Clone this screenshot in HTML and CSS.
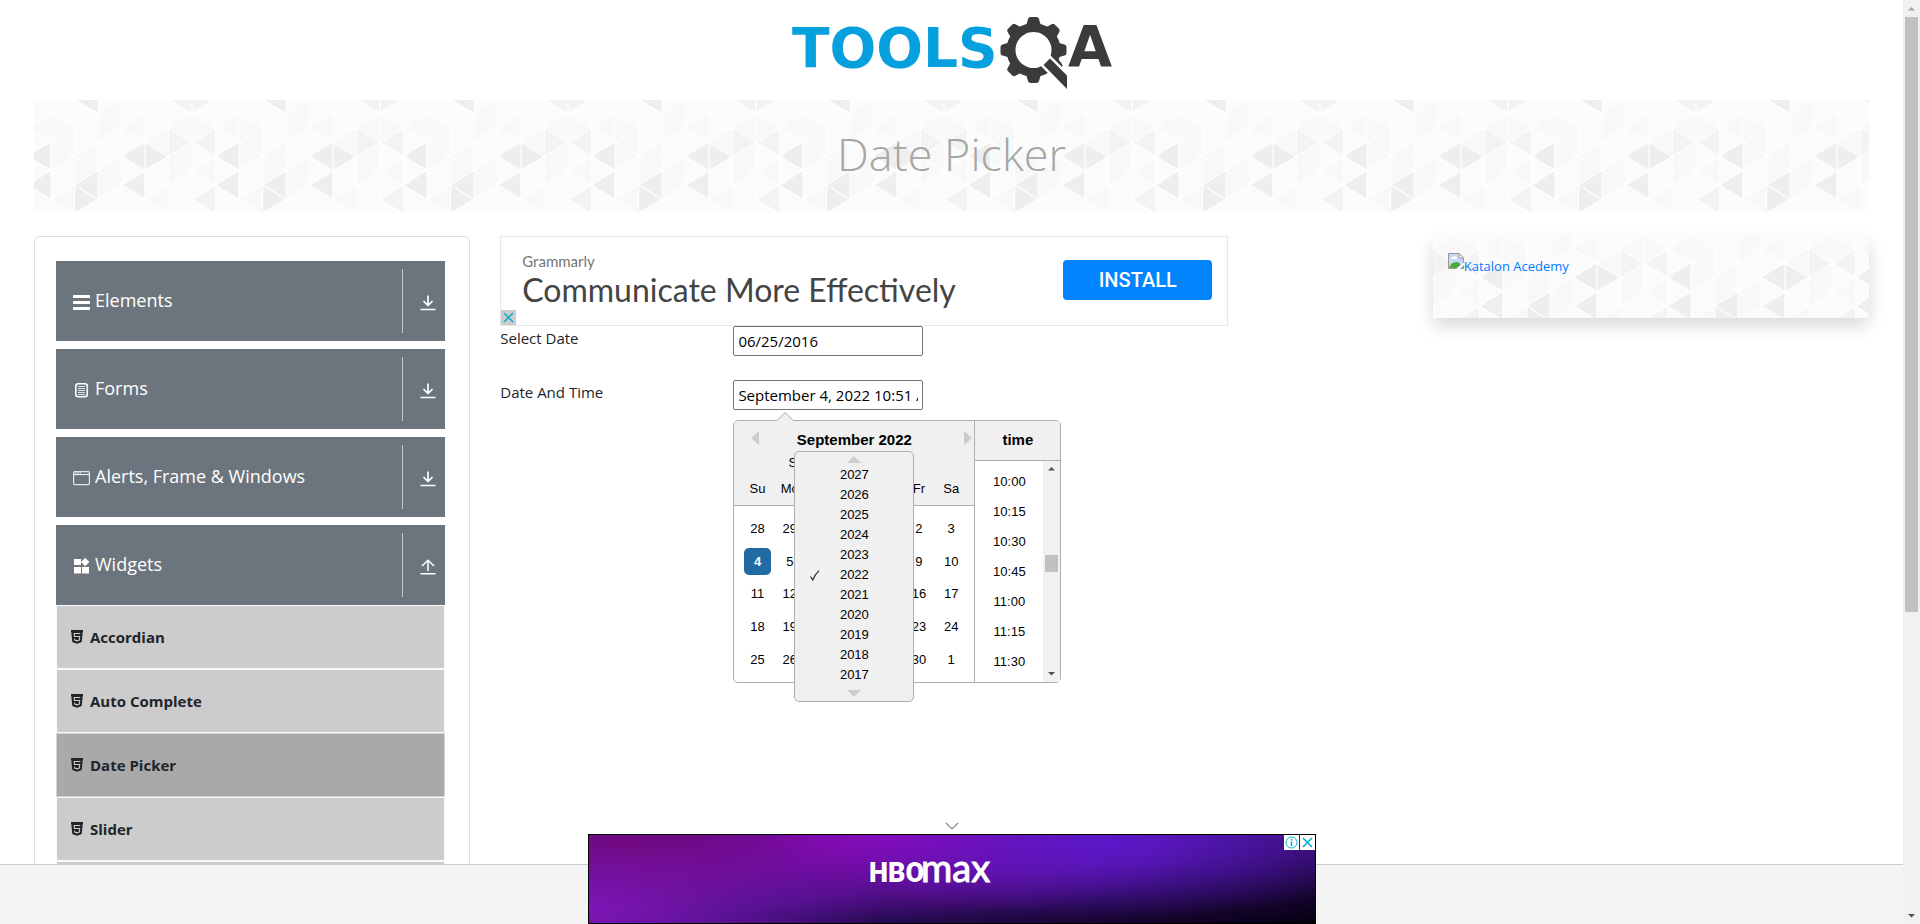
FILE: index.html
```html
<!DOCTYPE html>
<html lang="en">
<head>
<meta charset="utf-8">
<title>ToolsQA - Date Picker</title>
<link rel="stylesheet" href="styles.css">
</head>
<body>
<svg class="defs" width="0" height="0" aria-hidden="true">
  <symbol id="i-down" viewBox="0 0 16 16"><path d="M8 .5v10M3.500 6 8 10.500 12.500 6M.5 14.500h15" fill="none" stroke="currentColor" stroke-width="1.700"/></symbol>
  <symbol id="i-up" viewBox="0 0 16 16"><path d="M8 12V1.500M2 7l6-5.700L14 7M.5 14.700h15" fill="none" stroke="currentColor" stroke-width="1.500"/></symbol>
  <symbol id="i-html" viewBox="0 0 12 14"><path d="M0 0h12v2h-.3l-1 10L6 13.700 1.300 12 .3 2H0z" fill="currentColor"/><path d="M9.300 3.500H3.200l.3 3h5.200l-.4 3.500L6 10.800 3.700 10l-.1-1.300" fill="none" stroke="#ccc" stroke-width="1.100"/></symbol>
</svg>
<div class="page">
  <header class="site-header">
    <a href="#" class="logo" aria-label="ToolsQA">
      <svg width="350" height="100" viewBox="777 0 350 100">
        <text class="logo-tools" x="792" y="67">TOOLS</text>
        <g fill="#3b3b3c">
          <path id="tooth" d="M1026 26l2-7q.5-2 2.500-2h6q2 0 2.500 2l2 7z"/>
          <use href="#tooth" transform="rotate(45 1033.500 50)"/>
          <use href="#tooth" transform="rotate(90 1033.500 50)"/>
          <use href="#tooth" transform="rotate(180 1033.500 50)"/>
          <use href="#tooth" transform="rotate(225 1033.500 50)"/>
          <use href="#tooth" transform="rotate(270 1033.500 50)"/>
          <use href="#tooth" transform="rotate(315 1033.500 50)"/>
          <use href="#tooth" transform="rotate(126 1033.500 50)"/>
          <path fill-rule="evenodd" d="M1033.500 23a27 27 0 1 0 .01 0zM1033.500 32a18 18 0 1 1-.01 0z"/>
          <path d="M1043.500 65 1050 58.500 1067 75.500V89z" stroke="#fff" stroke-width="5" stroke-linejoin="miter" paint-order="stroke"/>
        </g>
        <text class="logo-a" x="1068" y="67">A</text>
      </svg>
    </a>
  </header>
  <main class="container">
    <div class="banner pattern"><h1>Date Picker</h1></div>
    <div class="columns">
      <nav class="sidebar">
        <div class="group"><button class="group-head">
          <svg width="17" height="16" viewBox="0 0 17 16"><path d="M1 2.500h15M1 8.500h15M1 14.500h15" stroke="#fff" stroke-width="3" stroke-linecap="round"/></svg>
          <span class="group-name">Elements</span><span class="group-arrow"><svg width="16" height="16"><use href="#i-down"/></svg></span></button></div>
        <div class="group"><button class="group-head">
          <svg width="17" height="16" viewBox="0 0 17 16"><rect x="2.800" y="1.800" width="11.500" height="13" rx="2.500" fill="none" stroke="#fff" stroke-width="1.600"/><path d="M5 4.500h7M5 6.500h7M5 8.500h7M5 10.500h7M5 12.500h7" stroke="#dfe2e4" stroke-width="1"/></svg>
          <span class="group-name">Forms</span><span class="group-arrow"><svg width="16" height="16"><use href="#i-down"/></svg></span></button></div>
        <div class="group"><button class="group-head">
          <svg width="17" height="16" viewBox="0 0 17 16"><rect x=".6" y="1.600" width="15.800" height="13" rx="1" fill="none" stroke="#e4e6e8" stroke-width="1.200"/><path d="M1 4.600h15" stroke="#fff" stroke-width="1"/><path d="M2 3h6" stroke="#fff" stroke-dasharray="1.500 .8"/></svg>
          <span class="group-name">Alerts, Frame &amp; Windows</span><span class="group-arrow"><svg width="16" height="16"><use href="#i-down"/></svg></span></button></div>
        <div class="group"><button class="group-head">
          <svg width="17" height="16" viewBox="0 0 17 16" fill="#fff"><path d="M1 1h7v6H1zM1 9h7v6.500H1zM9 9h7v6.500H9zM12.200-.2l4.200 4.200-4.200 4.200L8 4z"/></svg>
          <span class="group-name">Widgets</span><span class="group-arrow"><svg width="16" height="16"><use href="#i-up"/></svg></span></button>
          <ul class="menu">
            <li><a href="#"><svg width="12" height="14"><use href="#i-html"/></svg>Accordian</a></li>
            <li><a href="#"><svg width="12" height="14"><use href="#i-html"/></svg>Auto Complete</a></li>
            <li class="active"><a href="#"><svg width="12" height="14"><use href="#i-html"/></svg>Date Picker</a></li>
            <li><a href="#"><svg width="12" height="14"><use href="#i-html"/></svg>Slider</a></li>
            <li><a href="#"><svg width="12" height="14"><use href="#i-html"/></svg>Progress Bar</a></li>
          </ul>
        </div>
      </nav>
      <section class="content">
        <div class="ad">
          <div class="ad-text"><span class="ad-brand">Grammarly</span><span class="ad-title">Communicate More Effectively</span></div>
          <button class="install">INSTALL</button>
          <button class="ad-close" aria-label="Close ad"><svg width="15" height="15" viewBox="0 0 15 15"><path d="m3 3 9 9m0-9-9 9" stroke="#00aecd" stroke-width="1.500"/></svg></button>
        </div>
        <div class="field"><label for="date">Select Date</label><input id="date" type="text" value="06/25/2016"></div>
        <div class="field"><label for="datetime">Date And Time</label>
          <div class="picker-anchor">
            <input id="datetime" type="text" value="September 4, 2022 10:51 AM">
            <div class="picker">
              <svg class="tip" width="18" height="9" viewBox="0 0 18 9"><path d="M0 9 9 .7 18 9" fill="#f0f0f0" stroke="#aeaeae"/></svg>
              <div class="month">
                <div class="month-head">
                  <div class="month-nav">
                    <button aria-label="Previous month"><svg width="8" height="14"><path d="M8 0v14L0 7z" fill="#ccc"/></svg></button>
                    <strong>September 2022</strong>
                    <button aria-label="Next month"><svg width="8" height="14"><path d="M0 0v14l8-7z" fill="#ccc"/></svg></button>
                  </div>
                  <div class="month-selects"><span>September</span><span>2022</span></div>
                  <div class="week"><span>Su</span><span>Mo</span><span>Tu</span><span>We</span><span>Th</span><span>Fr</span><span>Sa</span></div>
                </div>
                <div class="days">
                  <button>28</button><button>29</button><button>30</button><button>31</button><button>1</button><button>2</button><button>3</button>
                  <button class="selected">4</button><button>5</button><button>6</button><button>7</button><button>8</button><button>9</button><button>10</button>
                  <button>11</button><button>12</button><button>13</button><button>14</button><button>15</button><button>16</button><button>17</button>
                  <button>18</button><button>19</button><button>20</button><button>21</button><button>22</button><button>23</button><button>24</button>
                  <button>25</button><button>26</button><button>27</button><button>28</button><button>29</button><button>30</button><button>1</button>
                </div>
              </div>
              <div class="time">
                <div class="time-head">time</div>
                <div class="time-body">
                  <ul class="time-list"><li>10:00</li><li>10:15</li><li>10:30</li><li>10:45</li><li>11:00</li><li>11:15</li><li>11:30</li></ul>
                  <div class="bar time-bar">
                    <svg width="17" height="16"><path d="M5 9.500 8.500 6l3.500 3.500z" fill="#505050"/></svg>
                    <span class="thumb"></span>
                    <svg width="17" height="16"><path d="M5 6h7L8.500 9.500z" fill="#505050"/></svg>
                  </div>
                </div>
              </div>
              <div class="years">
                <svg width="14" height="7"><path d="M0 7 7 0l7 7z" fill="#ccc"/></svg>
                <ul>
                  <li>2027</li><li>2026</li><li>2025</li><li>2024</li><li>2023</li>
                  <li class="current"><svg class="check" width="10" height="11" viewBox="0 0 10 11"><path d="M.5 6.500 2.800 10Q5 4.500 9 .7" fill="none" stroke="#222" stroke-width="1.100"/></svg>2022</li>
                  <li>2021</li><li>2020</li><li>2019</li><li>2018</li><li>2017</li>
                </ul>
                <svg width="14" height="7"><path d="M0 0h14L7 7z" fill="#ccc"/></svg>
              </div>
            </div>
          </div>
        </div>
      </section>
      <aside class="promo pattern">
        <a href="#"><svg width="16" height="16" viewBox="0 0 16 16"><path d="M.5 .5h10.500l4.500 4.500v10.500H.5z" fill="#c5d9f7" stroke="#999"/><path d="M3 6q0-2 2-2 2-1.500 3.500.5Q10 5 9.500 6z" fill="#fff"/><path d="M1 15q2-6 7.500-6 3 0 4 3l-4 3zM13 15l2-2v2z" fill="#4fa838"/><path d="M11 .5V5h4.500z" fill="#fff" stroke="#999"/><path d="m8.500 16 7.500-6.500v2.500l-4 4z" fill="#fff"/></svg>Katalon Acedemy</a>
      </aside>
    </div>
  </main>
  <footer class="footer"></footer>
  <div class="anchor-ad">
    <button class="collapse" aria-label="Hide ad"><svg width="14" height="8" viewBox="0 0 14 8"><path d="m1 1 6 6 6-6" fill="none" stroke="#888" stroke-width="1.200"/></svg></button>
    <div class="hbo">
      <svg width="130" height="48" viewBox="0 0 130 48" role="img" aria-label="HBO max">
        <text class="hbo-bold" x="0" y="36">HBO</text>
        <text class="hbo-max" x="52" y="36">max</text>
      </svg>
      <div class="ad-marks">
        <button aria-label="Ad info"><svg width="15" height="15" viewBox="0 0 15 15" fill="none" stroke="#00aecd"><circle cx="7.500" cy="7.500" r="5.500"/><path d="M7.500 6.500V11M7.500 4v1.500" stroke-width="1.500"/></svg></button>
        <button aria-label="Close"><svg width="15" height="15" viewBox="0 0 15 15"><path d="m3 3 9 9m0-9-9 9" stroke="#00aecd" stroke-width="1.500"/></svg></button>
      </div>
    </div>
  </div>
</div>
<div class="bar page-bar">
  <svg width="17" height="17"><path d="M5 10.500 8.500 7l3.500 3.500z" fill="#a3a3a3"/></svg>
  <span class="thumb"></span>
  <svg width="17" height="17"><path d="M5 7h7l-3.500 3.500z" fill="#505050"/></svg>
</div>
</body>
</html>
```
FILE: styles.css
```css
* { box-sizing: border-box; }
body { margin: 0; height: 100vh; display: flex; overflow: hidden; background: #fff; color: #212529; font: 15px/24px "Open Sans", "Noto Sans", sans-serif; }
button { border: 0; padding: 0; margin: 0; background: none; font: inherit; color: inherit; cursor: pointer; }
ul { list-style: none; margin: 0; padding: 0; }
a { text-decoration: none; }
svg { display: block; flex: none; }
.defs { position: absolute; }

.page { flex: 1; min-width: 0; position: relative; overflow: hidden; }
.site-header { display: flex; justify-content: center; }
.logo-tools, .logo-a { font: bold 55px "DejaVu Sans", sans-serif; fill: #06a0df; }
.logo-a { font-size: 57px; fill: #3b3b3c; }
.container { padding: 0 34px; }

.pattern { background-color: #fbfbfb; background-image: url("data:image/svg+xml,%3Csvg xmlns='http://www.w3.org/2000/svg' width='188' height='112' viewBox='0 0 188 112'%3E%3Cg fill='%23f8f8f8'%3E%3Cpath d='M17 13v29l-23.500-14.500zM40.500 27v29L17 42zM64 42v28L40.500 56zM87.500 56v29L64 70zM87.500 -1v28L64 13zM111 13v29L87.500 27zM134.500 27v29L111 42zM158 42v28l-23.500-14zM158 13v29l-23.500-15zM134.500 85v29L111 99zM17 13l23.500 14L17 42zM17 42l23.500 14L17 70zM40.500 56L64 70 40.500 85zM64 13l23.500 14L64 42zM64 70l23.500 15L64 99zM134.500 56L158 70l-23.500 15zM158 13l23.500 14L158 42zM40.500 85v29L17 99zM182 56v29l-24-15z'/%3E%3C/g%3E%3Cg fill='%23f3f3f3'%3E%3Cpath d='M134.500 27L158 42l-23.500 14zM182 27v29l-24-14zM182 85v29l-24-15zM158 -16v29l-23.500-14zM158 -16l24 15-24 14z'/%3E%3C/g%3E%3Cg fill='%23eeeeee'%3E%3Cpath d='M17 42v28L-6.500 56zM17 70v29L-6.500 85zM205 42v28l-23.500-14zM205 70v29l-23.500-14zM64 70v29L40.500 85zM40.500 85L64 99l-23.500 15zM111 42v28L87.500 56zM111 70v29L87.500 85zM111 42l23.500 14L111 70zM64 -16v29L40.500 -1z'/%3E%3C/g%3E%3Cpath d='M17 0v112M40.500 0v112M64 0v112M87.500 0v112M111 0v112M134.500 0v112M158 0v112M181.500 0v112M-7 -1L182 114M-7 27L135 114M-7 56L88 114M-7 85L41 114M38 -2L189 90M85 -2L189 61M132 -2L189 32M179 -2L189 4M-7 -1L17 -16M-7 27L41 -2M-7 56L88 -2M-7 85L135 -2M-7 114L182 -2M38 115L189 24M85 115L189 53M132 115L189 81M179 115L189 109' fill='none' stroke='%23fefefe' stroke-width='1.300'/%3E%3C/svg%3E"); }
.banner { height: 112px; padding-bottom: 4px; display: flex; justify-content: center; align-items: center; }
.banner h1 { margin: 0; font-weight: 300; font-size: 45px; line-height: 56px; color: #a6a6a6; }
.columns { margin-top: 24px; display: grid; grid-template-columns: repeat(4, minmax(0, 1fr)); gap: 30px; align-items: start; }

.sidebar { border: 1px solid #dfdfdf; border-radius: 5px; padding: 24px 24px 24px 21px; display: flex; flex-direction: column; gap: 8px; }
.group-head { width: 100%; height: 80px; padding: 8px 9px 8px 17px; display: flex; align-items: center; background: #6c757d; color: #fff; font-size: 18px; text-align: left; }
.group-head > svg { margin-top: 2px; }
.group-name { flex: 1; padding: 0 0 2px 5px; }
.group-arrow { height: 100%; padding: 3px 0 0 17px; display: flex; align-items: center; border-left: 1px solid #c4c8cb; }
.menu a { height: 64px; padding: 0 14px; display: flex; align-items: center; gap: 7px; border: 1px solid #fafafa; background: #ccc; color: #212529; font-weight: 700; }
.menu .active a { background: #a9a9a9; border-color: #ced4da; }

.content { grid-column: span 2; }
.ad { position: relative; max-width: 728px; height: 90px; padding: 0 15px 2px 21px; display: flex; align-items: center; justify-content: space-between; border: 1px solid #e6e6e6; }
.ad-text { display: flex; flex-direction: column; color: #444; }
.ad-brand { font: 15px/20px Lato, sans-serif; color: #757575; }
.ad-title { font: 32px/38px Lato, sans-serif; }
.install { width: 149px; height: 40px; border-radius: 4px; background: #0085ff; color: #fff; font: 500 20px Roboto, sans-serif; }
.ad-close { position: absolute; left: 0; bottom: 0; background: #ccc; }
.field { display: grid; grid-template-columns: repeat(4, minmax(0, 1fr)); gap: 30px; margin-bottom: 24px; }
.field input { width: 190px; height: 30px; padding: 0 4px; border: 1px solid #767676; border-radius: 2px; background: #fff; color: #000; font: inherit; display: block; }

.picker-anchor { position: relative; }
.picker { position: absolute; top: 40px; left: 0; width: 328px; height: 263px; display: flex; border: 1px solid #aeaeae; border-radius: 5px; background: #fff; color: #000; font: 13px/20px "Liberation Sans", Arial, sans-serif; }
.tip { position: absolute; left: 42px; top: -9px; }
.month { flex: 1; display: flex; flex-direction: column; }
.month-head { height: 85px; background: #f0f0f0; border-bottom: 1px solid #aeaeae; border-top-left-radius: 4px; }
.month-nav { height: 32px; padding: 6px 2px 0 17px; display: flex; align-items: flex-start; }
.month-nav button { padding-top: 4px; }
.month-nav strong { flex: 1; padding: 3px 15px 0 0; text-align: center; font-size: 15px; }
.month-selects { padding-left: 54px; display: flex; gap: 24px; }
.week { padding: 6px 7px 0; display: grid; grid-template-columns: repeat(7, 1fr); text-align: center; }
.days { height: 163px; margin: 7px 7px 0; display: grid; grid-template-columns: repeat(7, 1fr); grid-template-rows: repeat(5, 1fr); place-items: center; }
.days button { width: 27px; height: 27px; border-radius: 5px; }
.days .selected { background: #216ba5; color: #fff; font-weight: bold; }
.time { width: 86px; border-left: 1px solid #aeaeae; display: flex; flex-direction: column; }
.time-head { height: 40px; background: #f0f0f0; border-bottom: 1px solid #aeaeae; border-top-right-radius: 4px; text-align: center; font-weight: bold; font-size: 15px; line-height: 38px; }
.time-body { flex: 1; min-height: 0; display: flex; }
.time-list { flex: 1; padding-top: 6px; text-align: center; }
.time-list li { line-height: 30px; }
.bar { display: flex; flex-direction: column; align-items: center; background: #f1f1f1; }
.bar .thumb { background: #c1c1c1; width: 13px; }
.time-bar { width: 17px; justify-content: space-between; }
.time-bar .thumb { height: 17px; margin-bottom: 17px; }
.years { position: absolute; left: 60px; top: 30px; width: 120px; padding: 4px 0; display: flex; flex-direction: column; align-items: center; background: #f0f0f0; border: 1px solid #aeaeae; border-radius: 5px; }
.years ul { width: 100%; padding: 2px 0 5px; text-align: center; }
.current { position: relative; }
.check { position: absolute; left: 15px; top: 5px; }

.promo { height: 82px; padding: 16px 15px; background-position: 53px -15px; box-shadow: 0 8px 16px rgba(0, 0, 0, .15); }
.promo a { display: flex; align-items: flex-start; color: #007bff; font-size: 13px; line-height: 28px; }
.promo svg { margin-top: 1px; }

.footer { position: absolute; left: 0; right: 0; bottom: 0; height: 60px; border-top: 1px solid #ccc; background: #f4f4f4; }
.anchor-ad { position: absolute; left: 0; right: 0; bottom: 0; display: flex; flex-direction: column; align-items: center; }
.collapse { padding-bottom: 4px; }
.hbo { position: relative; width: 728px; height: 90px; padding: 11px 0 0 280px; border: 1px solid #000;
  background: radial-gradient(ellipse 40% 120% at 0 85%, rgba(128, 22, 184, .95), transparent),
    radial-gradient(ellipse 26% 90% at 5% 10%, rgba(108, 4, 100, .95), transparent),
    radial-gradient(ellipse 40% 85% at 71% 10%, rgba(92, 24, 204, .95), transparent),
    radial-gradient(ellipse 45% 95% at 42% 0, rgba(148, 10, 188, .95), transparent),
    linear-gradient(172deg, #4c0c88 20%, #3a1078 50%, #060010 100%); }
.hbo-bold { font: 900 27px Roboto, sans-serif; fill: #fff; }
.hbo-max { font: 38px Lato, sans-serif; fill: #fff; stroke: #fff; stroke-width: 1px; }
.ad-marks { position: absolute; top: 0; right: 0; display: flex; gap: 1px; }
.ad-marks button { background: #fff; }
.page-bar { width: 17px; }
.page-bar .thumb { height: 595px; margin-bottom: auto; }
```
